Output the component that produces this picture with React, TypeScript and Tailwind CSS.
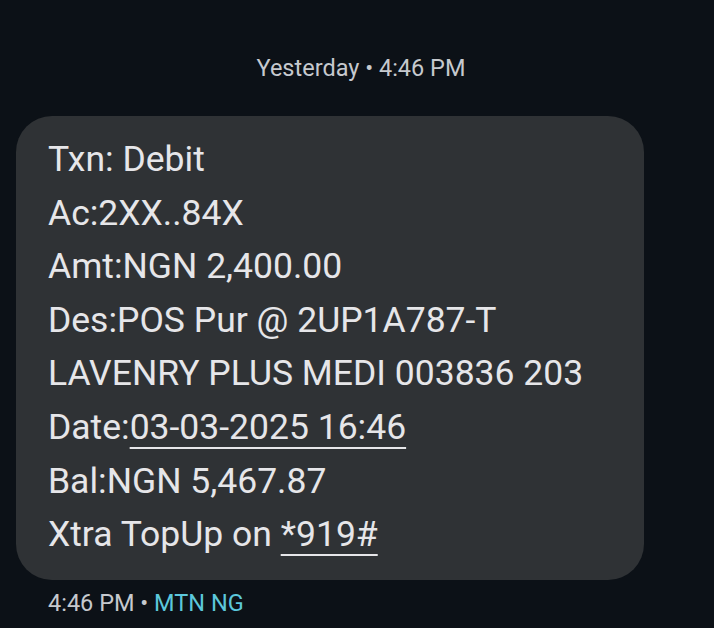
import React from "react";

export default function App() {
  const font = { fontFamily: "Roboto, 'Noto Sans', sans-serif" };
  return (
    <div className="w-[714px] h-[628px] bg-[#0c1117] overflow-hidden" style={font}>
      <div className="pt-[54px] flex justify-center">
        <div className="text-[23.5px] leading-[28px] text-[#c6c9ce] pl-[8px]">Yesterday • 4:46 PM</div>
      </div>
      <div className="mt-[34px] ml-[16px] w-[628px] rounded-[36px] bg-[#2f3235] pl-[32px] pt-[17px] pb-[18px] text-[#e6e6e9] text-[35.5px] leading-[53.6px]">
        <div>Txn: Debit</div>
        <div>Ac:2XX..84X</div>
        <div>Amt:NGN 2,400.00</div>
        <div>Des:POS Pur @ 2UP1A787-T</div>
        <div>LAVENRY PLUS MEDI 003836 203</div>
        <div>Date:<span className="underline decoration-[2px] underline-offset-[8px]">03-03-2025 16:46</span></div>
        <div>Bal:NGN 5,467.87</div>
        <div>Xtra TopUp on <span className="underline decoration-[2px] underline-offset-[8px]">*919#</span></div>
      </div>
      <div className="ml-[48px] mt-[9px] text-[23.5px] leading-[28px] text-[#c6c9ce]">
        4:46 PM • <span className="text-[#5cc8dc]">MTN NG</span>
      </div>
    </div>
  );
}
